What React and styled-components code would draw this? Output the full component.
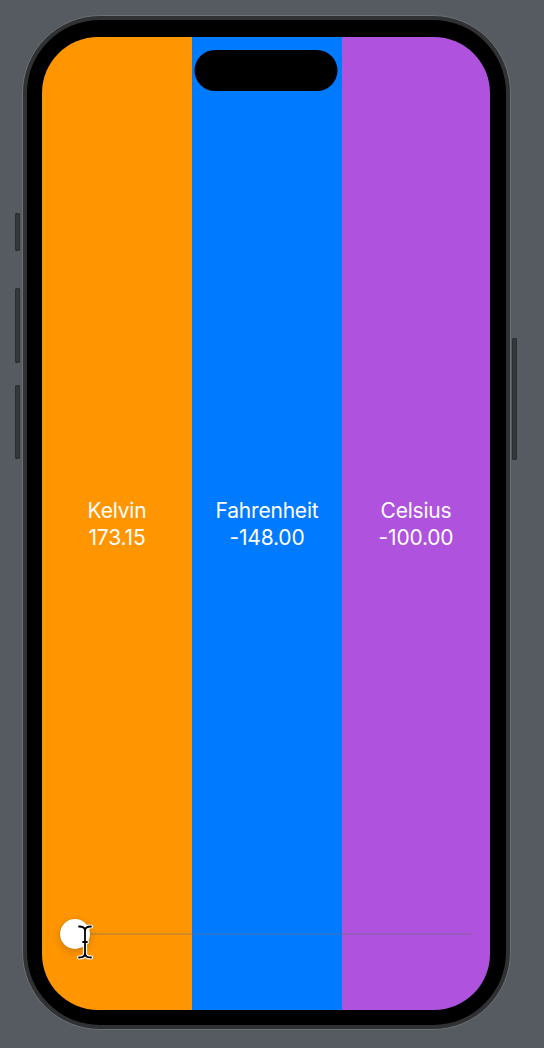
import React from 'react';
import styled, { createGlobalStyle } from 'styled-components';

const GlobalStyle = createGlobalStyle`
  html, body {
    margin: 0;
    padding: 0;
    background: #565b61;
    font-family: Inter, "Noto Sans", "DejaVu Sans", sans-serif;
  }
`;

const Stage = styled.div`
  box-sizing: border-box;
  width: 544px;
  height: 1048px;
  padding: 15px 0 0 15px;
  display: flex;
  align-items: flex-start;
  gap: 1px;
`;

const ButtonRail = styled.div`
  display: flex;
  flex-direction: column;
  width: 5px;
  padding-top: ${(p) => p.$top}px;
  gap: ${(p) => p.$gap || 0}px;
  ${(p) => (p.$right ? 'margin-left: 0;' : 'margin-right: 1px;')}
`;

const SideButton = styled.div`
  height: ${(p) => p.$height}px;
  margin-top: ${(p) => p.$offset || 0}px;
  border-radius: 2px;
  background: #34373b;
  box-shadow: inset 0 0 0 1px #2b2d30;
`;

const Phone = styled.div`
  box-sizing: border-box;
  width: 489px;
  height: 1015px;
  padding: 4px;
  border: 1px solid #6c7076;
  border-radius: 78px;
  background: #303133;
`;

const Bezel = styled.div`
  box-sizing: border-box;
  height: 100%;
  padding: 17px 16px 15px 15px;
  border-radius: 73px;
  background: #000;
`;

const Screen = styled.div`
  position: relative;
  height: 100%;
  display: grid;
  grid-template-columns: 150px 150px 1fr;
  border-radius: 56px;
  overflow: hidden;
`;

const Island = styled.div`
  position: absolute;
  top: 13px;
  left: 50%;
  width: 143px;
  height: 41px;
  transform: translateX(-50%);
  border-radius: 21px;
  background: #000;
`;

const Column = styled.div`
  display: flex;
  flex-direction: column;
  align-items: center;
  justify-content: center;
  background: ${(p) => p.$color};
  color: #fff;
  font-size: 21px;
  line-height: 27px;
  letter-spacing: -0.2px;
`;

const Slider = styled.div`
  position: absolute;
  left: 18px;
  right: 18px;
  bottom: 61px;
  height: 30px;
  display: flex;
  align-items: center;
`;

const Thumb = styled.div`
  position: relative;
  flex-shrink: 0;
  width: 30px;
  height: 30px;
  border-radius: 50%;
  background: #fff;
  box-shadow: 0 3px 8px rgba(0, 0, 0, 0.18), 0 0 1px rgba(0, 0, 0, 0.2);
`;

const Track = styled.div`
  flex: 1;
  height: 2px;
  background: rgba(110, 110, 120, 0.3);
`;

const Cursor = styled.svg`
  position: absolute;
  left: 16px;
  top: 5px;
  width: 18px;
  height: 36px;
`;

const scales = [
  { name: 'Kelvin', value: '173.15', color: '#ff9500' },
  { name: 'Fahrenheit', value: '-148.00', color: '#007aff' },
  { name: 'Celsius', value: '-100.00', color: '#af52de' },
];

const beam = 'M3 2.5 Q9 2.5 9 6.5 Q9 2.5 15 2.5 M9 6.5 V29.5 M3 33.5 Q9 33.5 9 29.5 Q9 33.5 15 33.5 M7 18 H11';

const App = () => {
  return (
    <Stage>
      <GlobalStyle />
      <ButtonRail $top={198}>
        <SideButton $height={38} />
        <SideButton $height={75} $offset={37} />
        <SideButton $height={74} $offset={22} />
      </ButtonRail>
      <Phone>
        <Bezel>
          <Screen>
            {scales.map((s) => (
              <Column key={s.name} $color={s.color}>
                <span>{s.name}</span>
                <span>{s.value}</span>
              </Column>
            ))}
            <Island />
            <Slider>
              <Thumb />
              <Track />
              <Cursor viewBox="0 0 18 36">
                <path d={beam} fill="none" stroke="#fff" strokeWidth="4.2" strokeLinecap="round" />
                <path d={beam} fill="none" stroke="#000" strokeWidth="1.8" strokeLinecap="round" />
              </Cursor>
            </Slider>
          </Screen>
        </Bezel>
      </Phone>
      <ButtonRail $right $top={323}>
        <SideButton $height={122} />
      </ButtonRail>
    </Stage>
  );
};

export default App;
